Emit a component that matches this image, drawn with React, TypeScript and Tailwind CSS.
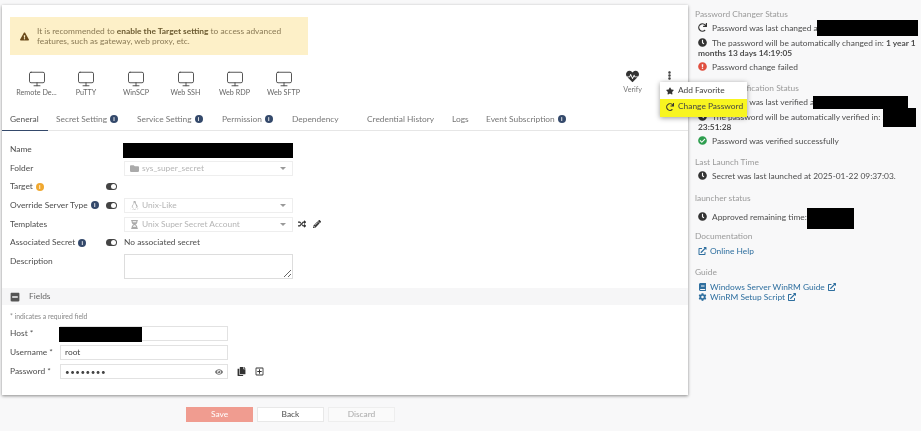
import type { ReactNode } from "react";
import { Monitor } from "lucide-react";
import {
  FaBook,
  FaCheckCircle,
  FaClock,
  FaCog,
  FaCopy,
  FaExclamationCircle,
  FaExclamationTriangle,
  FaExternalLinkAlt,
  FaEye,
  FaFolder,
  FaHeartbeat,
  FaHourglassHalf,
  FaLinux,
  FaMinusSquare,
  FaPencilAlt,
  FaRandom,
  FaRedo,
  FaRegPlusSquare,
  FaStar,
  FaEllipsisV,
} from "react-icons/fa";

const launchers = [
  { name: "Remote De...", width: "w-[49px]" },
  { name: "PuTTY", width: "w-[50px]" },
  { name: "WinSCP", width: "w-[50px]" },
  { name: "Web SSH", width: "w-[49px]" },
  { name: "Web RDP", width: "w-[49px]" },
  { name: "Web SFTP", width: "w-[49px]" },
];

const tabs = [
  { name: "General", info: false, width: "w-[46px]" },
  { name: "Secret Setting", info: true, width: "w-[81px]" },
  { name: "Service Setting", info: true, width: "w-[85px]" },
  { name: "Permission", info: true, width: "w-[70px]" },
  { name: "Dependency", info: false, width: "w-[75px]" },
  { name: "Credential History", info: false, width: "w-[85px]" },
  { name: "Logs", info: false, width: "w-[34px]" },
  { name: "Event Subscription", info: true, width: "w-[100px]" },
];

const Info = ({ color = "bg-[#34496b]" }: { color?: string }) => (
  <span
    className={`inline-flex h-[8px] w-[8px] shrink-0 items-center justify-center rounded-full text-[6px] font-bold leading-none text-white ${color}`}
  >
    i
  </span>
);

const Toggle = () => (
  <span className="flex h-[7px] w-[11px] items-center justify-end rounded-full bg-[#444] pr-px">
    <span className="h-[5px] w-[5px] rounded-full bg-white" />
  </span>
);

const Redacted = ({ className }: { className: string }) => (
  <div className={`absolute bg-black ${className}`} />
);

const Row = ({ label, toggle, children, h = "h-[18.7px]" }: { label: ReactNode; toggle?: boolean; children?: ReactNode; h?: string }) => (
  <div className={`flex items-center ${h}`}>
    <div className="flex w-[96px] items-center gap-[3px] whitespace-nowrap text-[#4d4d4d]">{label}</div>
    <div className="flex w-[18px] items-center">{toggle && <Toggle />}</div>
    {children}
  </div>
);

const DisabledSelect = ({ icon, value }: { icon: ReactNode; value: string }) => (
  <div className="flex h-[15px] w-[169px] items-center gap-[3px] border border-[#eee] px-[4px] text-[#b5b5b5]">
    <span className="flex w-[10px] justify-center text-[9px] text-[#aaa]">{icon}</span>
    <span className="flex-1">{value}</span>
    <span className="mr-0.5 h-0 w-0 border-x-[3px] border-t-[3px] border-x-transparent border-t-[#999]" />
  </div>
);

const Heading = ({ children, mt }: { children: ReactNode; mt: string }) => (
  <div className={`leading-[12px] text-[#9a9a9a] ${mt}`}>{children}</div>
);

const Status = ({ icon, children }: { icon: ReactNode; children: ReactNode }) => (
  <div className="mt-[3px] pl-[3px] leading-[10.5px] text-[#4d4d4d]">
    <span className="mr-[5px] inline-block w-[9px] align-[-1px] text-[9px]">{icon}</span>
    {children}
  </div>
);

const LinkLine = ({ children }: { children: ReactNode }) => (
  <div className="flex h-[10px] items-center gap-[3px] pl-[3px] text-[#2f6f9f]">{children}</div>
);

export default function App() {
  return (
    <div className="relative flex h-[431px] w-[921px] items-start overflow-hidden bg-[#f8f8f9] font-['Lato','Noto_Sans',sans-serif] text-[8.4px] blur-[0.35px]">
      <div className="ml-[2px] w-[686px] shrink-0">
        <div className="mt-[5px] flex h-[390px] flex-col bg-white shadow-[0_1px_3px_rgba(0,0,0,0.45)]">
          <div className="ml-[8px] mt-[12px] flex h-[38px] w-[298px] items-center gap-[8px] bg-[#fdf0c8] pl-[10px] leading-[10.5px] text-[#8a7a55]">
            <FaExclamationTriangle className="shrink-0 text-[9px] text-[#6b4a1a]" />
            <div className="w-[250px]">
              It is recommended to <b className="text-[#6b5a30]">enable the Target setting</b> to access advanced features, such as gateway, web proxy, etc.
            </div>
          </div>

          <div className="mt-[15px] flex items-start pl-[10px] pr-[9px]">
            {launchers.map((item) => (
              <div key={item.name} className={`flex flex-col items-center ${item.width}`}>
                <Monitor size={18} strokeWidth={1.2} className="text-[#444]" />
                <span className="whitespace-nowrap text-[7.2px] leading-[9px] text-[#666]">{item.name}</span>
              </div>
            ))}
            <div className="ml-auto mr-[23px] flex flex-col items-center">
              <FaHeartbeat className="text-[13px] text-[#333]" />
              <span className="mt-[2px] text-[7.2px] leading-[9px] text-[#777]">Verify</span>
            </div>
            <FaEllipsisV className="mr-[5px] mt-[1px] text-[9px] text-[#444]" />
          </div>

          <div className="mt-[16px] flex h-[18px] border-b border-[#e6e6e6] text-[#777]">
            {tabs.map((tab, i) => (
              <div key={tab.name} className={`flex h-[18px] items-start gap-[3px] whitespace-nowrap pl-[8px] ${i === 0 ? "border-b border-[#34496b] text-[#555]" : ""} ${tab.width}`}>
                {tab.name}
                {tab.info && <span className="mt-[2px] flex"><Info /></span>}
              </div>
            ))}
          </div>

          <div className="mt-[9px] px-[8px]">
            <Row label="Name" />
            <Row label="Folder">
              <DisabledSelect icon={<FaFolder />} value="sys_super_secret" />
            </Row>
            <Row label={<>Target <Info color="bg-[#f0a830]" /></>} toggle />
            <Row label={<>Override Server Type <Info /></>} toggle>
              <DisabledSelect icon={<FaLinux />} value="Unix-Like" />
            </Row>
            <Row label="Templates">
              <DisabledSelect icon={<FaHourglassHalf />} value="Unix Super Secret Account" />
              <FaRandom className="ml-[5px] text-[8px] text-[#333]" />
              <FaPencilAlt className="ml-[7px] text-[8px] text-[#333]" />
            </Row>
            <Row label={<>Associated Secret <Info /></>} toggle>
              <span className="text-[#4d4d4d]">No associated secret</span>
            </Row>
            <div className="mt-[2px] flex h-[25px]">
              <div className="w-[114px] pt-px text-[#4d4d4d]">Description</div>
              <textarea readOnly className="h-[25px] w-[169px] border border-[#ddd] bg-white" />
            </div>
          </div>

          <div className="mt-[9px] flex h-[17px] items-center gap-[9px] bg-[#f6f6f7] pl-[8px] text-[#666]">
            <FaMinusSquare className="text-[10px] text-[#555]" />
            Fields
          </div>

          <div className="mt-[7px] pl-[8px] text-[6.8px] leading-[9px] text-[#888]">* indicates a required field</div>

          <div className="mt-[3px] px-[8px]">
            {["Host *", "Username *", "Password *"].map((label) => (
              <div key={label} className="flex h-[19px] items-center">
                <div className="w-[50px] text-[#4d4d4d]">{label}</div>
                <div className="flex h-[15px] w-[168px] items-center border border-[#e2e2e2] px-1 text-[#444]">
                  {label === "Username *" && "root"}
                  {label === "Password *" && (
                    <>
                      <span className="flex-1 text-[8px] tracking-[0.5px]">••••••••</span>
                      <FaEye className="text-[8px] text-[#777]" />
                    </>
                  )}
                </div>
                {label === "Password *" && (
                  <>
                    <FaCopy className="ml-[9px] text-[9px] text-[#333]" />
                    <FaRegPlusSquare className="ml-[9px] text-[9px] text-[#333]" />
                  </>
                )}
              </div>
            ))}
          </div>
        </div>

        <div className="ml-[184px] mt-[12px] flex gap-[4px]">
          <button type="button" className="h-[15px] w-[67px] bg-[#f09c90] text-white">Save</button>
          <button type="button" className="h-[15px] w-[67px] border border-[#e8e8e8] bg-white text-[#4d4d4d]">Back</button>
          <button type="button" className="h-[15px] w-[67px] border border-[#eee] bg-[#fafafa] text-[#aaa]">Discard</button>
        </div>
      </div>

      <div className="ml-[7px] mt-[8px] w-[226px]">
        <Heading mt="mt-0">Password Changer Status</Heading>
        <Status icon={<FaRedo className="text-[#333]" />}>Password was last changed a</Status>
        <div className="mt-[4px] pl-[3px] text-[#4d4d4d] leading-[10.5px]">
          <span className="mr-[5px] inline-block w-[9px] align-[-1px] text-[9px]"><FaClock className="text-[#333]" /></span>
          The password will be automatically changed in: <b>1 year 1 months 13 days 14:19:05</b>
        </div>
        <Status icon={<FaExclamationCircle className="text-[#e04f3f]" />}>Password change failed</Status>

        <Heading mt="mt-[10px]">Password Verification Status</Heading>
        <Status icon={<FaRedo className="text-[#333]" />}>Password was last verified a</Status>
        <div className="mt-[4px] pl-[3px] text-[#4d4d4d] leading-[10.5px]">
          <span className="mr-[5px] inline-block w-[9px] align-[-1px] text-[9px]"><FaClock className="text-[#333]" /></span>
          The password will be automatically verified in: 2<br /><b>23:51:28</b>
        </div>
        <Status icon={<FaCheckCircle className="text-[#2e9e4f]" />}>Password was verified successfully</Status>

        <Heading mt="mt-[10px]">Last Launch Time</Heading>
        <Status icon={<FaClock className="text-[#333]" />}>Secret was last launched at 2025-01-22 09:37:03.</Status>

        <Heading mt="mt-[10px]">launcher status</Heading>
        <div className="mt-[8px]">
          <Status icon={<FaClock className="text-[#333]" />}>Approved remaining time:</Status>
        </div>

        <Heading mt="mt-[8px]">Documentation</Heading>
        <div className="mt-[4px]">
          <LinkLine><FaExternalLinkAlt className="w-[9px] text-[8px]" />Online Help</LinkLine>
        </div>

        <Heading mt="mt-[10px]">Guide</Heading>
        <div className="mt-[4px]">
          <LinkLine><FaBook className="w-[9px] text-[8px]" />Windows Server WinRM Guide <FaExternalLinkAlt className="text-[8px]" /></LinkLine>
          <LinkLine><FaCog className="w-[9px] text-[8px]" />WinRM Setup Script <FaExternalLinkAlt className="text-[8px]" /></LinkLine>
        </div>
      </div>

      <Redacted className="left-[123px] top-[143px] h-[15px] w-[170px]" />
      <Redacted className="left-[59px] top-[327px] h-[15px] w-[83px]" />
      <Redacted className="left-[817px] top-[20px] h-[16px] w-[101px]" />
      <Redacted className="left-[813px] top-[96px] h-[13px] w-[95px]" />
      <Redacted className="left-[883px] top-[108px] h-[19px] w-[33px]" />
      <Redacted className="left-[807px] top-[208px] h-[21px] w-[47px]" />

      <div className="absolute left-[660px] top-[82px] w-[87px] bg-white text-[#444] shadow-[0_1px_5px_rgba(0,0,0,0.4)]">
        <div className="flex h-[17px] items-center gap-[4px] pl-[6px]">
          <FaStar className="text-[8px] text-[#333]" />
          Add Favorite
        </div>
        <div className="flex h-[18px] items-center gap-[4px] whitespace-nowrap bg-[#f8f520] pb-[3px] pl-[6px]">
          <FaRedo className="text-[8px] text-[#333]" />
          Change Password
        </div>
      </div>
    </div>
  );
}
